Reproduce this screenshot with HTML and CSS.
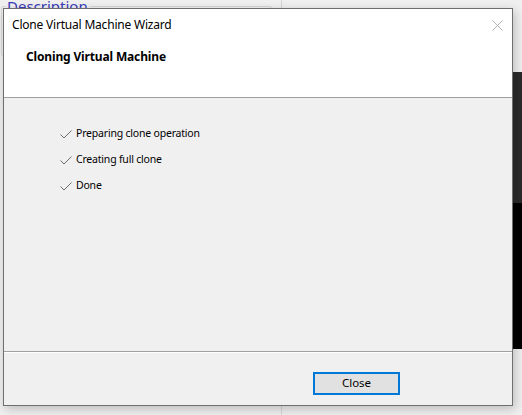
FILE: index.html
```html
<!DOCTYPE html>
<html>
<head>
<meta charset="utf-8">
<link rel="stylesheet" href="styles.css">
</head>
<body>
<div class="app">
  <div class="left-pane">
    <fieldset class="group">
      <legend class="group-legend">Description</legend>
    </fieldset>
  </div>
  <div class="right-pane">
    <div class="preview">
      <div class="preview-top"></div>
      <div class="preview-bottom"></div>
    </div>
  </div>
</div>

<div class="dialog">
  <div class="dialog-header">
    <div class="titlebar">
      <span class="title">Clone Virtual Machine Wizard</span>
      <svg class="close-x" width="11" height="11" viewBox="0 0 11 11">
        <path d="M0.5 0.5 L10.5 10.5 M10.5 0.5 L0.5 10.5" stroke="#b4b4b4" stroke-width="1" fill="none"/>
      </svg>
    </div>
    <div class="heading">Cloning Virtual Machine</div>
  </div>
  <div class="dialog-body">
    <ul class="steps">
      <li class="step"><svg class="check" width="12" height="9" viewBox="0 0 12 9"><path d="M0.5 4.5 L4 8 L11.5 0.5" stroke="#6e6e6e" stroke-width="1" fill="none"/></svg><span>Preparing clone operation</span></li>
      <li class="step"><svg class="check" width="12" height="9" viewBox="0 0 12 9"><path d="M0.5 4.5 L4 8 L11.5 0.5" stroke="#6e6e6e" stroke-width="1" fill="none"/></svg><span>Creating full clone</span></li>
      <li class="step"><svg class="check" width="12" height="9" viewBox="0 0 12 9"><path d="M0.5 4.5 L4 8 L11.5 0.5" stroke="#6e6e6e" stroke-width="1" fill="none"/></svg><span>Done</span></li>
    </ul>
  </div>
  <div class="dialog-footer">
    <button class="btn-close">Close</button>
  </div>
</div>
</body>
</html>
```

FILE: styles.css
```css
* { box-sizing: border-box; }
html, body {
  margin: 0;
  padding: 0;
}
body {
  width: 522px;
  height: 415px;
  overflow: hidden;
  position: relative;
  background: #f0f0f0;
  font-family: "Noto Sans", "Open Sans", sans-serif;
  font-size: 12px;
  color: #000;
}

/* background application */
.app {
  display: flex;
  height: 415px;
}
.left-pane {
  width: 282px;
  border-right: 1px solid #d6d6d6;
  padding: 0 9px 0 1px;
}
.group {
  margin: 0;
  margin-top: -4px;
  padding: 0;
  height: 60px;
  border: 1px solid #d8d8d8;
  border-radius: 2px;
}
.group-legend {
  font-family: "Noto Sans", sans-serif;
  font-size: 15px;
  color: #3b3bb8;
  padding: 0 2px;
  margin-left: 3px;
}
.right-pane {
  flex: 1;
  display: flex;
  justify-content: flex-end;
  padding-top: 72px;
}
.preview {
  width: 20px;
  height: 277px;
  display: flex;
  flex-direction: column;
}
.preview-top {
  height: 131px;
  background: #2b2b2b;
}
.preview-bottom {
  flex: 1;
  background: #000;
}

/* dialog window */
.dialog {
  position: absolute;
  left: 3px;
  top: 8px;
  width: 510px;
  height: 398px;
  border: 1px solid #6f6f6f;
  background: #f0f0f0;
  display: flex;
  flex-direction: column;
  box-shadow: 2px 3px 10px rgba(0, 0, 0, 0.22);
}
.dialog-header {
  background: #fff;
  height: 89px;
  border-bottom: 1px solid #a0a0a0;
}
.titlebar {
  height: 30px;
  display: flex;
  align-items: center;
  justify-content: space-between;
  padding: 0 9px 0 8px;
}
.title {
  font-size: 12px;
  letter-spacing: -0.2px;
  padding-top: 1px;
}
.close-x {
  display: block;
  margin-top: 2px;
}
.heading {
  font-weight: bold;
  font-size: 12px;
  padding-left: 22px;
  margin-top: 9px;
  letter-spacing: -0.15px;
}
.dialog-body {
  flex: 1;
  padding: 26px 0 0 56px;
  border-bottom: 1px solid #a0a0a0;
}
.steps {
  list-style: none;
  margin: 0;
  padding: 0;
  display: flex;
  flex-direction: column;
  gap: 8px;
}
.step {
  display: flex;
  align-items: center;
  height: 18px;
  color: #000;
  font-size: 10.5px;
  letter-spacing: -0.2px;
}
.check {
  display: block;
  margin-right: 4px;
  margin-top: 2px;
}
.dialog-footer {
  height: 53px;
  border-top: 1px solid #fff;
  display: flex;
  justify-content: flex-end;
  align-items: flex-start;
  padding: 19px 112px 0 0;
}
.btn-close {
  width: 87px;
  height: 23px;
  border: 2px solid #0078d7;
  background: #e1e1e1;
  font-family: "Noto Sans", "Open Sans", sans-serif;
  font-size: 11.5px;
  color: #000;
  padding: 0 0 2px 0;
  margin: 0;
  line-height: 16px;
}
```
